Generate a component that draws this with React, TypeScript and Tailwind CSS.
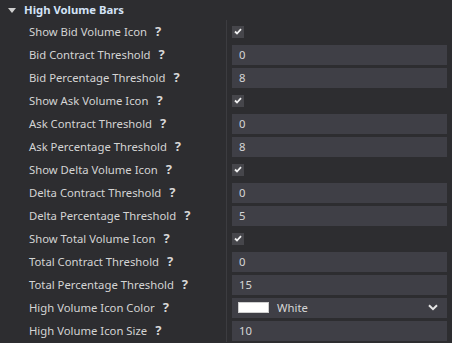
import React from 'react';

type Row = { label: string; kind: 'check' | 'text' | 'color'; value?: string };

const rows: Row[] = [
  { label: 'Show Bid Volume Icon', kind: 'check' },
  { label: 'Bid Contract Threshold', kind: 'text', value: '0' },
  { label: 'Bid Percentage Threshold', kind: 'text', value: '8' },
  { label: 'Show Ask Volume Icon', kind: 'check' },
  { label: 'Ask Contract Threshold', kind: 'text', value: '0' },
  { label: 'Ask Percentage Threshold', kind: 'text', value: '8' },
  { label: 'Show Delta Volume Icon', kind: 'check' },
  { label: 'Delta Contract Threshold', kind: 'text', value: '0' },
  { label: 'Delta Percentage Threshold', kind: 'text', value: '5' },
  { label: 'Show Total Volume Icon', kind: 'check' },
  { label: 'Total Contract Threshold', kind: 'text', value: '0' },
  { label: 'Total Percentage Threshold', kind: 'text', value: '15' },
  { label: 'High Volume Icon Color', kind: 'color', value: 'White' },
  { label: 'High Volume Icon Size', kind: 'text', value: '10' },
];

const Check = () => (
  <div className="w-[12px] h-[12px] bg-[#46464b] flex items-center justify-center">
    <svg width="8" height="7" viewBox="0 0 8 7">
      <path d="M1 3.5 L3 5.5 L7 1.2" stroke="#f0f0f0" strokeWidth="1.8" fill="none" />
    </svg>
  </div>
);

const Value = ({ row }: { row: Row }) => {
  if (row.kind === 'check') return <Check />;
  if (row.kind === 'color') {
    return (
      <div className="h-[20px] w-full bg-[#3f3f46] flex items-center pl-[6px] pr-[9px]">
        <div className="w-[31px] h-[11px] bg-white border border-[#cfcfcf]" />
        <span className="ml-[8px] text-[#d6d6d6]">{row.value}</span>
        <svg className="ml-auto" width="10" height="7" viewBox="0 0 10 7">
          <path d="M1 1.2 L5 5.2 L9 1.2" stroke="#e6e6e6" strokeWidth="2" fill="none" />
        </svg>
      </div>
    );
  }
  return (
    <div className="h-[20px] w-full bg-[#3f3f46] flex items-center pl-[7px] text-[#d6d6d6]">
      {row.value}
    </div>
  );
};

const App = () => {
  return (
    <div
      className="w-[452px] h-[343px] bg-[#2d2d30] overflow-hidden text-[11.3px] leading-none"
      style={{ fontFamily: '"Noto Sans", "Open Sans", sans-serif' }}
    >
      <div className="h-[20px] flex items-center">
        <svg className="ml-[8px]" width="8" height="5" viewBox="0 0 8 5">
          <path d="M0 0 L8 0 L4 5 Z" fill="#cfcfcf" />
        </svg>
        <span className="ml-[8px] font-bold text-[#d3e3f7]">High Volume Bars</span>
      </div>
      <div className="flex">
        <div className="w-[226px]">
          {rows.map((r) => (
            <div key={r.label} className="h-[23px] flex items-center pl-[29px] text-[#d4d4d4]">
              <span>{r.label}</span>
              <span className="ml-[8px] font-bold text-[#d8d8d8] text-[13px]">?</span>
            </div>
          ))}
        </div>
        <div className="w-px bg-[#3c3c40]" />
        <div className="flex-1">
          {rows.map((r) => (
            <div key={r.label} className="h-[23px] flex items-center pl-[5px] pr-[5px]">
              <Value row={r} />
            </div>
          ))}
        </div>
      </div>
    </div>
  );
};

export default App;
